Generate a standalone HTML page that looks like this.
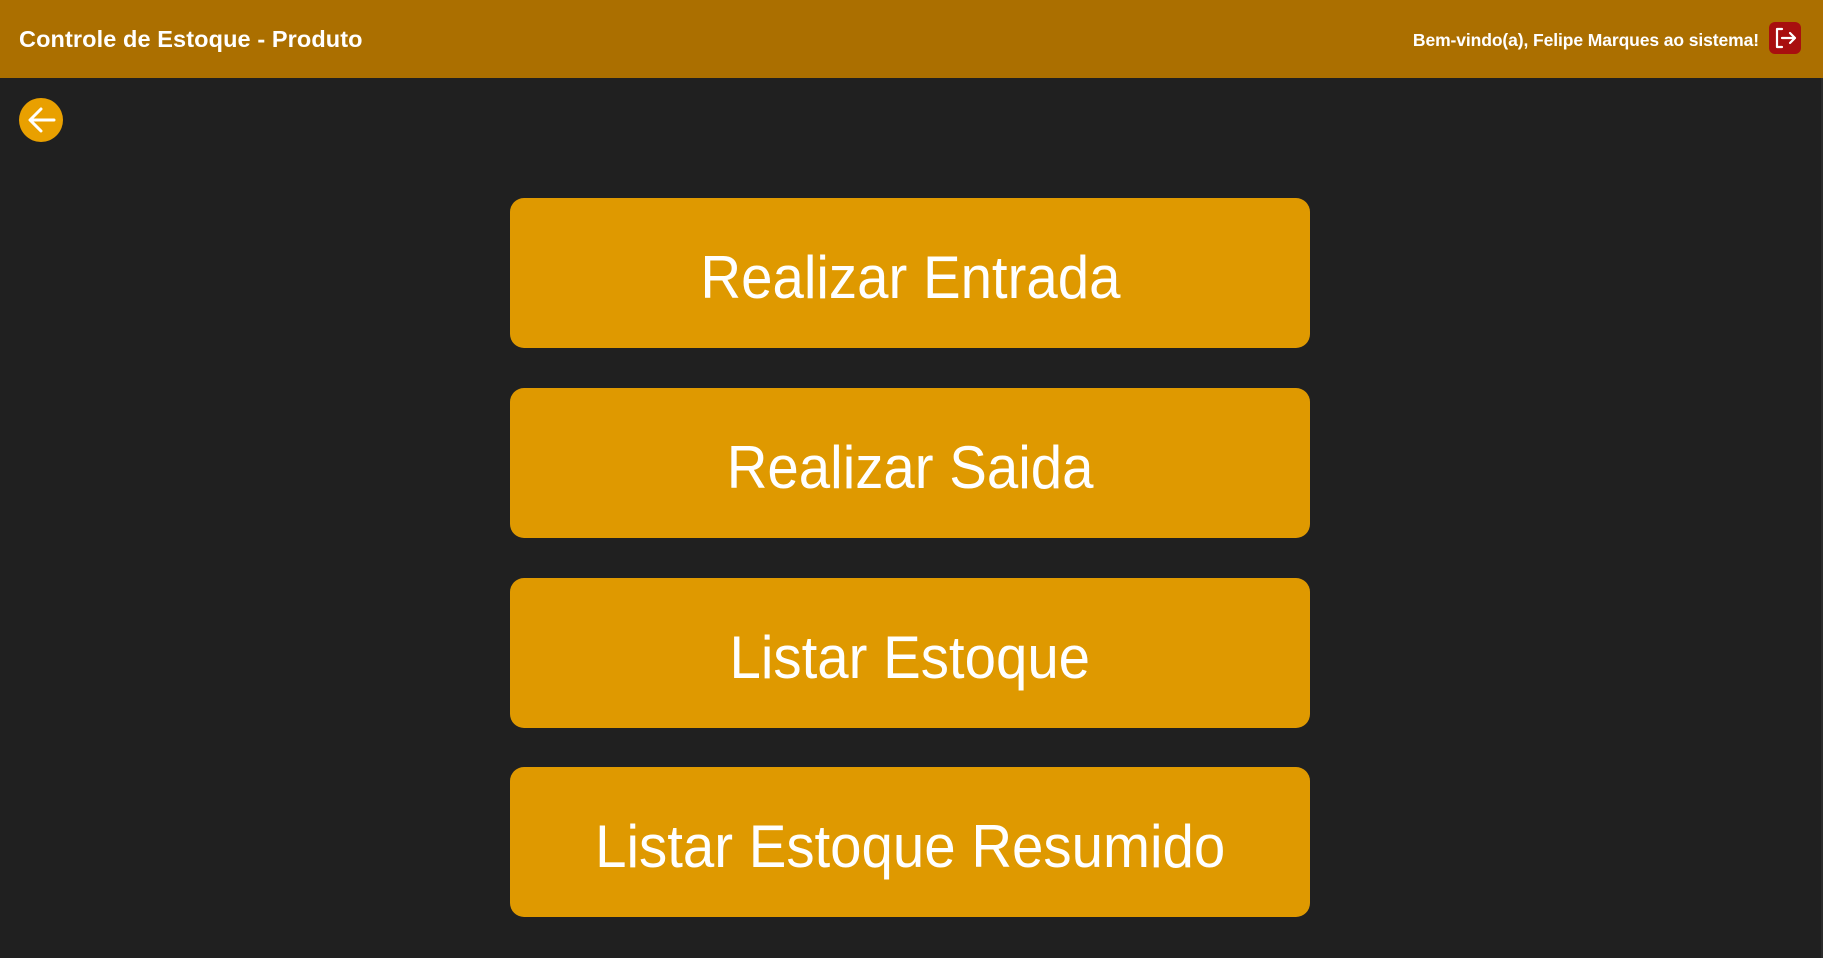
<!DOCTYPE html>
<html><head><meta charset="utf-8"><style>
html,body{margin:0;padding:0;}
body{width:1823px;height:958px;background:#202020;position:relative;overflow:hidden;font-family:"Liberation Sans",sans-serif;}
.hdr{position:absolute;left:0;top:0;width:1823px;height:78px;background:#ab6f00;}
.title{position:absolute;left:19px;top:26px;color:#fff;font-weight:bold;font-size:23.5px;letter-spacing:0.1px;}
.wel{position:absolute;right:64px;top:30px;color:#fff;font-weight:bold;font-size:17.5px;letter-spacing:-0.1px;}
.exit{position:absolute;left:1769px;top:22px;width:32px;height:32px;background:#a80f0f;border-radius:6px;}
.back{position:absolute;left:19px;top:98px;width:44px;height:44px;border-radius:50%;background:#e9a000;}
.btn{position:absolute;left:510px;width:800px;height:150px;background:#df9900;border-radius:14px;color:#fff;text-align:center;line-height:160px;font-size:60px;}
.btn span{display:inline-block;transform:scaleX(0.94);}
.edge{position:absolute;right:0;top:78px;width:2px;height:880px;background:#2c2c2c;}
</style></head><body>
<div class="hdr"></div>
<div class="title">Controle de Estoque - Produto</div>
<div class="wel">Bem-vindo(a), Felipe Marques ao sistema!</div>
<div class="exit"><svg width="32" height="32" viewBox="0 0 32 32" fill="none" stroke="#fff" stroke-width="2.2" stroke-linecap="round" stroke-linejoin="round"><path d="M13 7H8v18h5"/><path d="M13 16h13M21 11l5 5-5 5"/></svg></div>
<div class="back"><svg width="44" height="44" viewBox="0 0 44 44" fill="none" stroke="#fff" stroke-width="3" stroke-linecap="round" stroke-linejoin="round"><path d="M35 22H12M22 11L11 22l11 11"/></svg></div>
<div class="btn" style="top:198px"><span>Realizar Entrada</span></div>
<div class="btn" style="top:388px"><span>Realizar Saida</span></div>
<div class="btn" style="top:578px"><span>Listar Estoque</span></div>
<div class="btn" style="top:767px"><span>Listar Estoque Resumido</span></div>
<div class="edge"></div>
</body></html>
